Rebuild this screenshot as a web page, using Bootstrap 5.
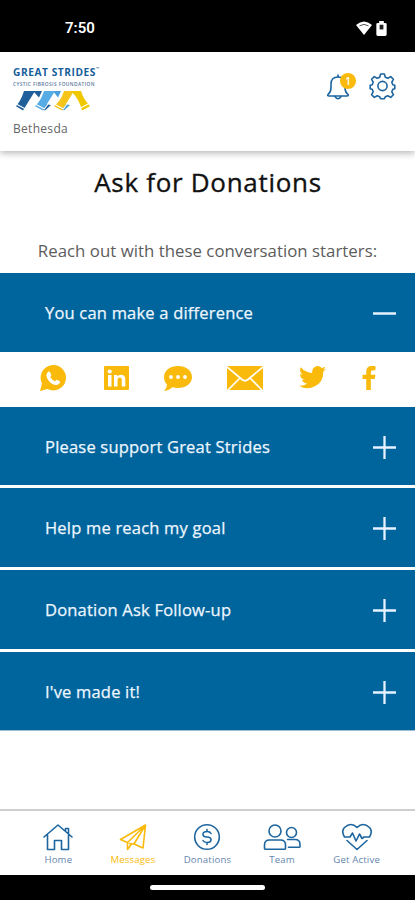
<!DOCTYPE html>
<html lang="en">
<head>
<meta charset="utf-8">
<meta name="viewport" content="width=device-width, initial-scale=1">
<title>Ask for Donations</title>
<link href="https://cdn.jsdelivr.net/npm/bootstrap@5.3.0/dist/css/bootstrap.min.css" rel="stylesheet">
<style>
:root{--brand:#00659c;--gold:#f9ba0c;--line:#1d659f}
body{font-family:"Open Sans","Noto Sans",sans-serif;height:900px;overflow:hidden;color:#444}
svg{display:block;flex:none}
.status-strip{height:52px;padding:4px 28px 0 65px;font:600 15px/1 Roboto,sans-serif}
.app-head{height:99px;padding:14px 19px 0 13px;box-shadow:0 2px 7px rgba(0,0,0,.3);position:relative}
.logo-name{font:700 10.2px/13px "Open Sans",sans-serif;color:#17609a;white-space:nowrap;letter-spacing:.55px}
.logo-name sup{font-size:4px;top:-6px;letter-spacing:0;line-height:0}
.logo-sub{font:600 4.8px/11px "Open Sans",sans-serif;color:#56779b;white-space:nowrap;letter-spacing:.42px}
.chapter{font-size:12px;line-height:16px;color:#666;letter-spacing:.3px;margin-top:10px}
.count{position:absolute;left:14px;top:-1px;width:16px;height:16px;background:var(--gold);font:600 10px/16px "Open Sans",sans-serif}
.page-title{font-size:26px;line-height:36px;font-weight:400;-webkit-text-stroke:.35px #111;letter-spacing:.7px;color:#111;margin:13px 0 0 1px}
.intro{font-size:16.8px;line-height:24px;font-weight:400;letter-spacing:.03px;margin:39px 0 10px;color:#5c5c5c}
.starter{height:78.7px;background:var(--brand);color:#eef6ff;font-size:16.5px;-webkit-text-stroke:.25px #eef6ff;letter-spacing:.2px;padding:2px 19px 0 45px;border:0}
.starters{row-gap:3px;border-bottom:1px solid #9dbdd6}
.share{height:55px;color:var(--gold);padding-left:40px;padding-bottom:3px}
.share svg:nth-child(2){margin-left:38px}
.share svg:nth-child(3){margin-left:34px}
.share svg:nth-child(4){margin-left:34px}
.share svg:nth-child(5){margin-left:36px}
.share svg:nth-child(6){margin-left:36px}
.tabs{height:66px;border-top:2px solid #cfcfcf;padding:12px 21px 0}
.tab{color:#6487ad;font-size:9.6px;line-height:12px;width:20%;letter-spacing:.17px}
.tab svg{color:var(--line);margin-bottom:3px}
.tab.active,.tab.active svg{color:var(--gold)}
.home-strip{height:25px}
.home-bar{width:115px;height:5px}
.stroke{fill:none;stroke:currentColor;stroke-width:1.6;stroke-linejoin:round;stroke-linecap:round}
</style>
<script src="https://cdn.jsdelivr.net/npm/bootstrap@5.3.0/dist/js/bootstrap.bundle.min.js"></script>
</head>
<body class="d-flex flex-column bg-white">
<div class="status-strip bg-black text-white d-flex align-items-center flex-shrink-0">
  <span class="me-auto">7:50</span>
  <svg width="16" height="14" viewBox="0 0 16 14"><path d="M0 4Q8-3 16 4L8 14z" fill="#fff"/><path d="M3.500 4.800Q8 2 12.500 4.800" fill="none" stroke="#555" stroke-width="1"/></svg>
  <svg class="ms-1" width="11" height="15" viewBox="0 0 11 16"><path d="M3 2V0h5v2h1.500q1.500 0 1.500 1.500v11Q11 16 9.500 16h-8Q0 16 0 14.500v-11Q0 2 1.500 2z" fill="#fff"/><rect x="3.500" y="4" width="4" height="5" fill="#222"/></svg>
</div>
<header class="app-head bg-white d-flex justify-content-between flex-shrink-0">
  <div>
    <div class="logo-name">GREAT STRIDES<sup>™</sup></div>
    <div class="logo-sub">CYSTIC FIBROSIS FOUNDATION</div>
    <svg width="80" height="21" viewBox="0 -1 80 19.500" preserveAspectRatio="none">
      <path d="M20 0h9l-3 6zM28 10l4 2 6 1-6 5-8-4z" fill="#205f99"/>
      <path d="M40 0h8l-3 6zM47 10l4 2 6 1-6 5-8-4z" fill="#4a9fdb"/>
      <path d="M11 0h11L10 18l-7-4Q8 9 11 0z" fill="#205f99"/>
      <path d="M31 0h11L30 18l-8-4Q28 9 31 0z" fill="#58ace5"/>
      <path d="M51 0h10L49 18l-8-4Q48 9 51 0z" fill="#f5c51b"/>
      <path d="M58 0h10q2 7 9 14l-8 4q-3-11-11-18z" fill="#f0c800"/>
      <path d="M4 12.500l8 4M23 12.500l8 4M42 12.500l8 4M31 17l4-5M50 17l4-5M68 15.500l8-4" stroke="#fff"/>
    </svg>
    <div class="chapter">Bethesda</div>
  </div>
  <div class="d-flex">
    <div class="position-relative mt-2">
      <svg width="43" height="30" viewBox="0 0 43 30" color="#1d659f"><g class="stroke"><path d="M2 20.500Q5 18 5 14V10Q5 3 12 3T19 10V14Q19 18 22 20.500Q23 22 21 22H3Q1 22 2 20.500z"/><path d="M12 3V1M9 22.500Q12 27 15 22.500"/></g></svg>
      <span class="count rounded-circle text-white text-center">1</span>
    </div>
    <svg class="mt-1" width="27" height="30" viewBox="0 0 27 30" color="#1d659f"><g class="stroke" transform="translate(13.500 16)"><path d="M-1.900-12h3.800l.9 3.200 2.500 1 2.900-1.600 2.700 2.700-1.600 2.900 1 2.500 2 .6v3.400l-2 .6-1 2.500 1.600 2.900-2.700 2.700-2.900-1.600-2.500 1-.9 1.900h-3.800l-.9-1.900-2.500-1-2.900 1.600-2.700-2.700 1.600-2.900-1-2.500-2-.6v-3.400l2-.6 1-2.500-1.600-2.900 2.700-2.700 2.900 1.600 2.500-1z"/><circle r="4.600"/></g></svg>
  </div>
</header>
<main class="flex-grow-1 text-center">
  <h1 class="page-title">Ask for Donations</h1>
  <p class="intro">Reach out with these conversation starters:</p>
  <button class="starter w-100 d-flex align-items-center justify-content-between"><span>You can make a difference</span><svg width="23" height="23" viewBox="0 0 23 23"><path d="M0 11.500h23" stroke="#e6f2ff" stroke-width="2.500"/></svg></button>
  <div class="share d-flex align-items-center">
    <svg width="26" height="26" viewBox="0 0 26 26"><path d="M0 26L2 18.500A12.700 12.700 0 1 1 7.500 24z" fill="currentColor"/><path d="M8.200 6.500Q9.500 6 10.300 7.700L11.300 10Q11.300 11 10.300 12 12 15 15 16.200L16.700 14.700 20 16.300Q20.200 19.500 16.500 20 12 20 8.500 15.500 4.500 10 8.200 6.500z" fill="#fff"/></svg>
    <svg width="25" height="24" viewBox="0 0 25 24"><rect width="25" height="24" rx="1" fill="currentColor"/><g fill="#fff"><circle cx="5.700" cy="5.500" r="2.100"/><path d="M4 9h3.500v11.500H4zM10 9h3.300v1.600Q14.500 8.700 17 8.700q4.300 0 4.300 5v6.800h-3.500v-6.200q0-2.800-2-2.800-2.300 0-2.300 3v6H10z"/></g></svg>
    <svg width="30" height="26" viewBox="0 0 30 26"><path d="M15 1C23 1 29 5.500 29 12S23 23 15 23Q12 23 9.500 22.200 6 25.500 1 26 4 23 4 19.500 1 16.500 1 12C1 5.500 7 1 15 1z" fill="currentColor"/><g fill="#fff"><circle cx="8" cy="12" r="1.900"/><circle cx="15" cy="12" r="1.900"/><circle cx="22" cy="12" r="1.900"/></g></svg>
    <svg width="36" height="24" viewBox="0 0 36 24"><rect width="36" height="24" rx="1" fill="currentColor"/><path d="M0 1L15 13.500Q18 16 21 13.500L36 1M1 24L13 12M35 24L23 12" fill="none" stroke="#fff" stroke-width="1.700"/></svg>
    <svg width="27" height="23" viewBox="0 0 24 20"><path d="M24 2.300a10 10 0 0 1-2.800.8A5 5 0 0 0 23.300.4a10 10 0 0 1-3.100 1.200A4.900 4.900 0 0 0 11.800 6 14 14 0 0 1 1.700.9a4.900 4.900 0 0 0 1.500 6.600A5 5 0 0 1 1 6.900a4.900 4.900 0 0 0 3.900 4.900 5 5 0 0 1-2.200.1 4.900 4.900 0 0 0 4.600 3.400A9.900 9.900 0 0 1 0 17.300 14 14 0 0 0 21.500 4.900 10 10 0 0 0 24 2.300z" fill="currentColor"/></svg>
    <svg width="14" height="24" viewBox="0 0 14 26"><path d="M4 26V14H0V9.500h4V6q0-6 6-6h4v4.500h-2.500Q9 4.500 9 7v2.500h5L13.300 14H9v12z" fill="currentColor"/></svg>
  </div>
  <div class="starters d-flex flex-column">
    <button class="starter w-100 d-flex align-items-center justify-content-between"><span>Please support Great Strides</span><svg width="23" height="23" viewBox="0 0 23 23"><path d="M0 11.500h23M11.500 0v23" stroke="#e6f2ff" stroke-width="2.300"/></svg></button>
    <button class="starter w-100 d-flex align-items-center justify-content-between"><span>Help me reach my goal</span><svg width="23" height="23" viewBox="0 0 23 23"><path d="M0 11.500h23M11.500 0v23" stroke="#e6f2ff" stroke-width="2.300"/></svg></button>
    <button class="starter w-100 d-flex align-items-center justify-content-between"><span>Donation Ask Follow-up</span><svg width="23" height="23" viewBox="0 0 23 23"><path d="M0 11.500h23M11.500 0v23" stroke="#e6f2ff" stroke-width="2.300"/></svg></button>
    <button class="starter w-100 d-flex align-items-center justify-content-between"><span>I've made it!</span><svg width="23" height="23" viewBox="0 0 23 23"><path d="M0 11.500h23M11.500 0v23" stroke="#e6f2ff" stroke-width="2.300"/></svg></button>
  </div>
</main>
<nav class="tabs bg-white d-flex flex-shrink-0">
  <div class="tab d-flex flex-column align-items-center"><svg width="30" height="28" viewBox="0 0 30 28"><g class="stroke"><path d="M1 14L15 2l14 12M4.500 12v14.500h7V17.500h7v9h7V12M22.500 8V5.500h3V11"/></g></svg>Home</div>
  <div class="tab active d-flex flex-column align-items-center"><svg width="28" height="28" viewBox="0 0 28 28"><g class="stroke"><path d="M26.500 2L1.500 16.500l7 3L26.500 2 24 25l-9-4L26.500 2M8.500 19.500V26.500l4-5.500M10.500 20.500l4.500.5"/></g></svg>Messages</div>
  <div class="tab d-flex flex-column align-items-center"><svg width="28" height="28" viewBox="0 0 28 28"><g class="stroke"><circle cx="14" cy="14" r="12.300"/><path d="M18 10.500Q17 8.500 14 8.500 10 8.500 10 11.200T14 14 18 16.800 14 19.500Q11 19.500 10 17.500M14 6.500v2M14 19.500v2"/></g></svg>Donations</div>
  <div class="tab d-flex flex-column align-items-center"><svg width="38" height="28" viewBox="0 0 38 28"><g class="stroke"><circle cx="12" cy="8" r="6"/><path d="M1.500 25.500V22q0-5 5-5h11q5 0 5 5v3.500q0 .8-1 .8h-19q-1 0-1-.8z"/><circle cx="28.500" cy="9.500" r="5"/><path d="M24.500 16.500H32q5 0 5 5v2q0 .8-1 .8H25.500"/></g></svg>Team</div>
  <div class="tab d-flex flex-column align-items-center"><svg width="30" height="28" viewBox="0 0 30 28"><g class="stroke"><path d="M2.500 14Q-1 8 2.500 4.500 9-1.500 15 4.500 21-1.500 27.500 4.500 31 8 27.500 14M2.500 14H8l2.500-4 3.500 8 3.500-7 2.500 4.500 2-1.500h5.500M5 17.500l10 9 10-9"/></g></svg>Get Active</div>
</nav>
<div class="home-strip bg-black d-flex justify-content-center align-items-center flex-shrink-0"><div class="home-bar bg-white rounded-pill"></div></div>
</body>
</html>
